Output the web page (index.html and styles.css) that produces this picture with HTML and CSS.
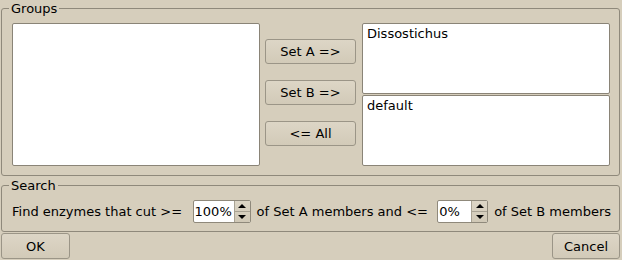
FILE: index.html
```html
<!DOCTYPE html>
<html>
<head>
<meta charset="utf-8">
<link rel="stylesheet" href="styles.css">
</head>
<body>
<div class="dialog">
  <fieldset class="group groups">
    <legend>Groups</legend>
    <div class="groups-grid">
      <div class="list"></div>
      <div class="btn-col">
        <button class="btn">Set A =&gt;</button>
        <button class="btn">Set B =&gt;</button>
        <button class="btn">&lt;= All</button>
      </div>
      <div class="sets">
        <div class="list set"><span class="item">Dissostichus</span></div>
        <div class="list set"><span class="item">default</span></div>
      </div>
    </div>
  </fieldset>
  <fieldset class="group search">
    <legend>Search</legend>
    <div class="search-row">
      <span class="label grow">Find enzymes that cut &gt;=</span>
      <div class="spin spin-a">
        <span class="spin-field">100%</span>
        <span class="spin-btns">
          <span class="arr up"></span>
          <span class="arr down"></span>
        </span>
      </div>
      <span class="label grow">of Set A members and &lt;=</span>
      <div class="spin spin-b">
        <span class="spin-field">0%</span>
        <span class="spin-btns">
          <span class="arr up"></span>
          <span class="arr down"></span>
        </span>
      </div>
      <span class="label">of Set B members</span>
    </div>
  </fieldset>
  <div class="footer">
    <button class="btn foot">OK</button>
    <button class="btn foot">Cancel</button>
  </div>
</div>
</body>
</html>
```
FILE: styles.css
```css
html, body {
  margin: 0;
  padding: 0;
  background: #d6cebc;
}
body {
  width: 622px;
  height: 260px;
  overflow: hidden;
  font-family: "DejaVu Sans", sans-serif;
  font-size: 13px;
  color: #000;
}
.dialog {
  padding: 0 2px 0 1px;
  display: flex;
  flex-direction: column;
}
.group {
  margin: 0;
  border: 1px solid #8f897b;
  border-radius: 3px;
  min-width: 0;
}
.group legend {
  padding: 0 2px;
  margin-left: -3px;
  line-height: 15px;
  height: 15px;
}
.groups {
  margin-top: 1px;
  padding: 7px 8px 9px 10px;
}
.groups-grid {
  display: grid;
  grid-template-columns: 248px 92px 248px;
  column-gap: 5px;
  height: 143px;
}
.groups-grid > .btn-col { margin-right: 1px; }
.list {
  background: #fff;
  border: 1px solid #8a8477;
  border-radius: 2px;
  box-sizing: border-box;
}
.btn-col {
  display: flex;
  flex-direction: column;
  gap: 16px;
  padding-top: 16px;
}
.btn {
  font: inherit;
  color: #000;
  height: 25px;
  border: 1px solid #9b9587;
  border-radius: 3px;
  background: linear-gradient(#ddd6c6, #d2cab8);
  padding: 0;
  box-sizing: border-box;
}
.sets {
  display: flex;
  flex-direction: column;
  gap: 1px;
}
.set {
  flex: 1;
  padding: 2px 4px;
}
.item { line-height: 15px; }
.search {
  margin-top: 2px;
  padding: 6px 8px 8px 10px;
}
.search-row {
  display: flex;
  align-items: center;
  gap: 6px;
  height: 24px;
}
.label { white-space: nowrap; }
.grow { flex: 1; }
.spin {
  display: flex;
  height: 23px;
  box-sizing: border-box;
  border: 1px solid #8f897b;
  border-radius: 2px;
  background: #fff;
  overflow: hidden;
}
.spin-a { width: 58px; }
.spin-b { width: 51px; }
.spin-field {
  flex: 1;
  padding-left: 1px;
  line-height: 21px;
}
.spin-btns {
  width: 15px;
  display: flex;
  flex-direction: column;
  background: linear-gradient(#ddd6c6, #d0c8b6);
  border-left: 1px solid #a8a293;
}
.arr {
  flex: 1;
  display: flex;
  align-items: center;
  justify-content: center;
}
.arr.up { border-bottom: 1px solid #a8a293; }
.arr.up::before {
  content: "";
  border-left: 4px solid transparent;
  border-right: 4px solid transparent;
  border-bottom: 4px solid #000;
}
.arr.down::before {
  content: "";
  border-left: 4px solid transparent;
  border-right: 4px solid transparent;
  border-top: 4px solid #000;
}
.footer {
  display: flex;
  justify-content: space-between;
  margin-top: 1px;
}
.foot { width: 69px; height: 26px; }
.foot:last-child { width: 68px; }
```
